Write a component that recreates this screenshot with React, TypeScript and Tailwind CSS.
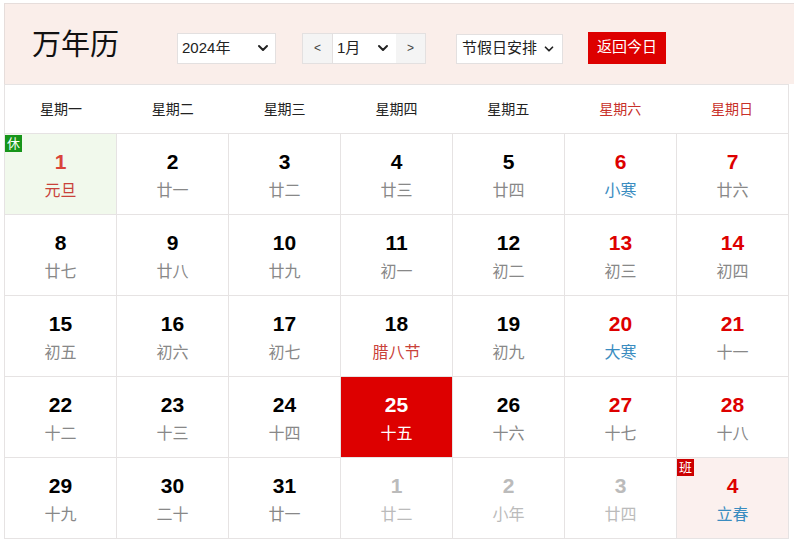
import { ChevronDown } from 'lucide-react';

type Day = {
  n: number;
  lunar: string;
  kind?: 'holiday' | 'term' | 'festival';
  weekend?: boolean;
  other?: boolean;
  today?: boolean;
  badge?: '休' | '班';
};

const weekdays = ['星期一', '星期二', '星期三', '星期四', '星期五', '星期六', '星期日'];

const days: Day[] = [
  { n: 1, lunar: '元旦', kind: 'holiday', badge: '休' },
  { n: 2, lunar: '廿一' },
  { n: 3, lunar: '廿二' },
  { n: 4, lunar: '廿三' },
  { n: 5, lunar: '廿四' },
  { n: 6, lunar: '小寒', kind: 'term', weekend: true },
  { n: 7, lunar: '廿六', weekend: true },
  { n: 8, lunar: '廿七' },
  { n: 9, lunar: '廿八' },
  { n: 10, lunar: '廿九' },
  { n: 11, lunar: '初一' },
  { n: 12, lunar: '初二' },
  { n: 13, lunar: '初三', weekend: true },
  { n: 14, lunar: '初四', weekend: true },
  { n: 15, lunar: '初五' },
  { n: 16, lunar: '初六' },
  { n: 17, lunar: '初七' },
  { n: 18, lunar: '腊八节', kind: 'festival' },
  { n: 19, lunar: '初九' },
  { n: 20, lunar: '大寒', kind: 'term', weekend: true },
  { n: 21, lunar: '十一', weekend: true },
  { n: 22, lunar: '十二' },
  { n: 23, lunar: '十三' },
  { n: 24, lunar: '十四' },
  { n: 25, lunar: '十五', today: true },
  { n: 26, lunar: '十六' },
  { n: 27, lunar: '十七', weekend: true },
  { n: 28, lunar: '十八', weekend: true },
  { n: 29, lunar: '十九' },
  { n: 30, lunar: '二十' },
  { n: 31, lunar: '廿一' },
  { n: 1, lunar: '廿二', other: true },
  { n: 2, lunar: '小年', other: true },
  { n: 3, lunar: '廿四', other: true },
  { n: 4, lunar: '立春', kind: 'term', weekend: true, badge: '班' },
];

function DayCell({ d }: { d: Day }) {
  let bg = 'bg-white';
  if (d.today) bg = 'bg-[#dd0000]';
  else if (d.badge === '休') bg = 'bg-[#f1f9ec]';
  else if (d.badge === '班') bg = 'bg-[#fbf0ee]';

  let numColor = 'text-black';
  if (d.today) numColor = 'text-white';
  else if (d.other) numColor = 'text-[#bbbbbb]';
  else if (d.kind === 'holiday') numColor = 'text-[#d9443a]';
  else if (d.weekend) numColor = 'text-[#dd0000]';

  let lunarColor = 'text-[#888888]';
  if (d.today) lunarColor = 'text-white';
  else if (d.other) lunarColor = 'text-[#bbbbbb]';
  else if (d.kind === 'holiday' || d.kind === 'festival') lunarColor = 'text-[#c9423a]';
  else if (d.kind === 'term') lunarColor = 'text-[#3a8cc0]';

  return (
    <div className={`relative h-[81px] border-r border-b border-[#e6e3e3] flex flex-col items-center pt-[14px] ${bg}`}>
      {d.badge && (
        <span
          className={`absolute left-0 top-[1px] w-[17px] h-[17px] flex items-center justify-center text-[13px] leading-none text-white ${d.badge === '休' ? 'bg-[#17951a]' : 'bg-[#cc0000]'}`}
        >
          {d.badge}
        </span>
      )}
      <span className={`text-[21px] leading-[28px] font-bold ${numColor}`}>{d.n}</span>
      <span className={`text-[16px] leading-[22px] mt-[4px] ${lunarColor}`}>{d.lunar}</span>
    </div>
  );
}

export default function App() {
  return (
    <div
      className="w-[794px] h-[545px] bg-white overflow-hidden pt-[3px] pl-[4px]"
      style={{ fontFamily: '"Liberation Sans", "Noto Sans CJK SC", sans-serif' }}
    >
      {/* 顶部工具栏 */}
      <div className="h-[81px] bg-[#faeeea] border-t border-l border-[#e6dddb] flex items-center pt-[2px]">
        <h1 className="ml-[27px] text-[29px] leading-none text-[#111]">万年历</h1>
        <div className="ml-[58px] w-[99px] h-[31px] bg-white border border-[#e3e0e0] flex items-center justify-between pl-[4px] pr-[4px] mt-[6px]">
          <span className="text-[15px] text-[#222]">2024年</span>
          <ChevronDown className="w-[16px] h-[16px] text-[#222]" strokeWidth={3} />
        </div>
        <div className="ml-[26px] h-[31px] flex border border-[#e3e0e0] mt-[6px]">
          <button className="w-[30px] bg-[#f4f4f4] text-[12px] text-[#444] border-r border-[#e3e0e0]">&lt;</button>
          <div className="w-[63px] bg-white flex items-center justify-between pl-[4px] pr-[5px]">
            <span className="text-[15px] text-[#222]">1月</span>
            <ChevronDown className="w-[16px] h-[16px] text-[#222]" strokeWidth={3} />
          </div>
          <button className="w-[29px] bg-[#f4f4f4] text-[12px] text-[#444]">&gt;</button>
        </div>
        <div className="ml-[30px] w-[107px] h-[30px] bg-white border border-[#e3e0e0] flex items-center justify-between pl-[5px] pr-[6px] mt-[7px]">
          <span className="text-[15px] text-[#222]">节假日安排</span>
          <ChevronDown className="w-[14px] h-[14px] text-[#222]" strokeWidth={3} />
        </div>
        <button className="ml-[25px] w-[78px] h-[32px] bg-[#dd0000] text-white text-[15px] mt-[5px]">返回今日</button>
      </div>

      {/* 日历 */}
      <div className="w-[785px] border-l border-[#e6e3e3]">
        <div className="grid grid-cols-7 h-[50px] border-t border-b border-r border-[#e6e3e3] bg-white">
          {weekdays.map((w, i) => (
            <div
              key={w}
              className={`flex items-center justify-center text-[14px] ${i >= 5 ? 'text-[#c8302a]' : 'text-[#222]'}`}
            >
              {w}
            </div>
          ))}
        </div>
        <div className="grid grid-cols-7">
          {days.map((d, i) => (
            <DayCell key={i} d={d} />
          ))}
        </div>
      </div>
    </div>
  );
}
